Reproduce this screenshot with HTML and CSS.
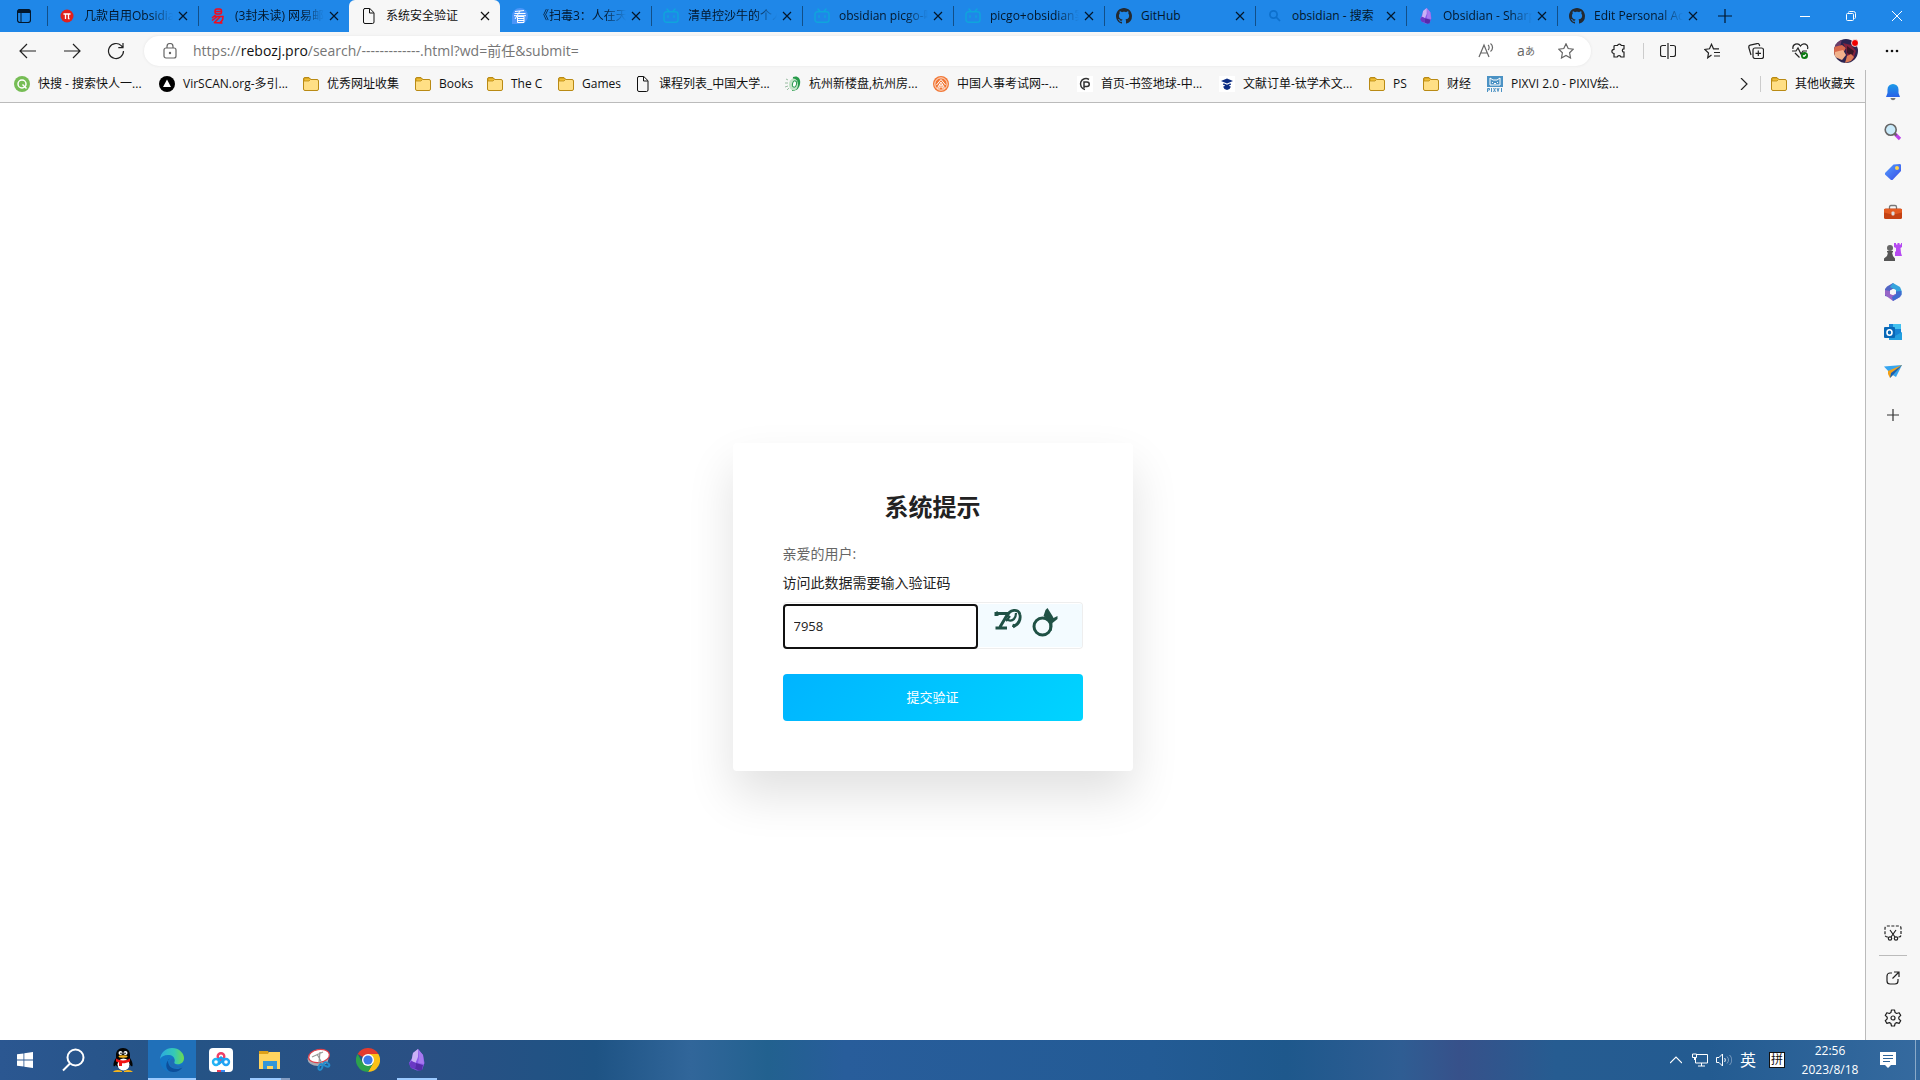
FILE: index.html
```html
<!DOCTYPE html>
<html lang="zh-CN">
<head>
<meta charset="utf-8">
<meta name="viewport" content="width=device-width, initial-scale=1">
<title>系统安全验证</title>
<link rel="stylesheet" href="styles.css">
</head>
<body>
<svg class="sprite" aria-hidden="true">
  <symbol id="close" viewBox="0 0 16 16"><path d="M4 4l8 8M12 4l-8 8" fill="none" stroke="currentColor" stroke-width="1.2"/></symbol>
  <symbol id="page" viewBox="0 0 16 16"><path d="M3.5.5h5.300l4.200 4.200V14a1.500 1.500 0 0 1-1.500 1.500H4A1.500 1.500 0 0 1 2.500 14V2A1.500 1.500 0 0 1 4 .5zM8.500.8V5h4.200" fill="none" stroke="currentColor"/></symbol>
  <symbol id="bili" viewBox="0 0 16 16"><g fill="none" stroke="#0fa5dc" stroke-width="1.400" stroke-linecap="round"><rect x="1" y="3.700" width="14" height="10.600" rx="2.500"/><path d="M4 1l2 2.300M12 1l-2 2.300M5 7.700v1.600M11 7.700v1.600"/></g></symbol>
  <symbol id="github" viewBox="0 0 16 16"><path fill="#24292f" d="M8 0C3.580 0 0 3.580 0 8c0 3.540 2.290 6.530 5.470 7.590.4.070.55-.17.55-.38 0-.19-.01-.82-.01-1.490-2.010.37-2.530-.49-2.690-.94-.09-.23-.48-.94-.82-1.130-.28-.15-.68-.52-.01-.53.63-.01 1.080.58 1.230.82.72 1.210 1.870.87 2.330.66.07-.52.28-.87.51-1.070-1.780-.2-3.640-.89-3.640-3.950 0-.87.31-1.590.82-2.150-.08-.2-.36-1.020.08-2.120 0 0 .67-.21 2.200.82.64-.18 1.320-.27 2-.27s1.360.09 2 .27c1.530-1.040 2.200-.82 2.200-.82.44 1.100.16 1.920.08 2.120.51.56.82 1.270.82 2.150 0 3.070-1.870 3.750-3.650 3.950.29.25.54.73.54 1.480 0 1.070-.01 1.930-.01 2.200 0 .21.15.46.55.38A8.010 8.010 0 0 0 16 8c0-4.420-3.580-8-8-8z"/></symbol>
  <symbol id="obsidian" viewBox="0 0 16 22"><path d="M9 0l5 6 1.500 8L13 21l-5 .5L2 19 0 14l3-5 1-5z" fill="#8b5bea"/><path d="M9 0L4 4 2.500 12l4 2L9 8z" fill="#c9b1f6"/><path d="M9 0l1 8-1 6 6 1-1-9z" fill="#a679f0"/><path d="M2.500 12L0 15l2 4 4 1 1-6z" fill="#6a38c4"/><path d="M7 14l-1 6 4 1.500 3-.5 1-5z" fill="#552baa"/></symbol>
  <symbol id="folder" viewBox="0 0 16 16"><path d="M.5 3A1.500 1.500 0 0 1 2 1.500h4L8 3.500h6A1.500 1.500 0 0 1 15.500 5v8a1.500 1.500 0 0 1-1.500 1.500H2A1.500 1.500 0 0 1 .5 13z" fill="#ffdf85" stroke="#b98a14"/><path d="M1 5V3a1 1 0 0 1 1-1h4l1.500 1.500L6 5z" fill="#f0bd32" stroke="#b98a14" stroke-width=".8"/></symbol>
</svg>

<header class="tabstrip">
  <button class="tab-actions" aria-label="标签页操作菜单"><svg width="14" height="14" viewBox="0 0 14 14"><rect x=".5" y=".5" width="13" height="13" rx="2.500" fill="none" stroke="currentColor" stroke-width="1.200"/><path d="M.5 2.500C.5 1 1 .5 3 .5h8c2 0 2.500.5 2.500 3.500H.5z" fill="currentColor"/><path d="M4 4v9.500" stroke="currentColor"/></svg></button>
  <div class="tabs" role="tablist">
    <div class="tab" role="tab"><svg viewBox="0 0 16 16"><circle cx="8" cy="8" r="6.500" fill="#e0201d"/><path d="M4.500 6h7M6.500 6v5M9.500 6v4.500l1 .5" fill="none" stroke="#fff" stroke-width="1.300"/></svg><span class="tab-title">几款自用Obsidia</span><button class="tab-close" aria-label="关闭标签页"><svg><use href="#close"/></svg></button></div>
    <div class="tab" role="tab"><svg viewBox="0 0 16 16"><g fill="none" stroke="#f30b1c" stroke-width="1.500"><rect x="5" y="1" width="6.500" height="5" rx="2"/><path d="M5 3.500h6M5.500 7L2 10M4 8.500h9c0 3-1 5-3 6M7.500 8.500L2 12.500M10 9l-6 6M4.500 14.500c3 0 4 .5 8 .5"/></g></svg><span class="tab-title">(3封未读) 网易邮</span><button class="tab-close" aria-label="关闭标签页"><svg><use href="#close"/></svg></button></div>
    <div class="tab active" role="tab" aria-selected="true"><svg><use href="#page"/></svg><span class="tab-title whole">系统安全验证</span><button class="tab-close" aria-label="关闭标签页"><svg><use href="#close"/></svg></button></div>
    <div class="tab after-active" role="tab"><svg viewBox="0 0 16 16"><path d="M0 8a8 8 0 1 1 8 8H0z" fill="#4c96f8"/><path d="M3 3.500l9-1M2.500 5.500h11M2 7.700h12M8 3L3 11M5.500 8.500h6.500v6H5.500zM5.500 10.500H12M5.500 12.500H12" fill="none" stroke="#fff"/></svg><span class="tab-title">《扫毒3：人在天</span><button class="tab-close" aria-label="关闭标签页"><svg><use href="#close"/></svg></button></div>
    <div class="tab" role="tab"><svg><use href="#bili"/></svg><span class="tab-title">清单控沙牛的个人</span><button class="tab-close" aria-label="关闭标签页"><svg><use href="#close"/></svg></button></div>
    <div class="tab" role="tab"><svg><use href="#bili"/></svg><span class="tab-title">obsidian picgo-哔</span><button class="tab-close" aria-label="关闭标签页"><svg><use href="#close"/></svg></button></div>
    <div class="tab" role="tab"><svg><use href="#bili"/></svg><span class="tab-title">picgo+obsidian实</span><button class="tab-close" aria-label="关闭标签页"><svg><use href="#close"/></svg></button></div>
    <div class="tab" role="tab"><svg><use href="#github"/></svg><span class="tab-title whole">GitHub</span><button class="tab-close" aria-label="关闭标签页"><svg><use href="#close"/></svg></button></div>
    <div class="tab" role="tab"><svg viewBox="0 0 16 16"><g fill="none" stroke="#0d70cd" stroke-width="1.700"><circle cx="6.500" cy="6.500" r="3.600"/><path d="M9.200 9.200l3.800 3.800"/></g></svg><span class="tab-title whole">obsidian - 搜索</span><button class="tab-close" aria-label="关闭标签页"><svg><use href="#close"/></svg></button></div>
    <div class="tab" role="tab"><svg><use href="#obsidian"/></svg><span class="tab-title">Obsidian - Sharp</span><button class="tab-close" aria-label="关闭标签页"><svg><use href="#close"/></svg></button></div>
    <div class="tab" role="tab"><svg><use href="#github"/></svg><span class="tab-title">Edit Personal Ac</span><button class="tab-close" aria-label="关闭标签页"><svg><use href="#close"/></svg></button></div>
  </div>
  <button class="new-tab" aria-label="新建标签页"><svg width="14" height="14" viewBox="0 0 14 14"><path d="M7 0v14M0 7h14" stroke="currentColor" stroke-width="1.200"/></svg></button>
  <div class="window-controls">
    <button aria-label="最小化"><svg width="10" height="10" viewBox="0 0 10 10"><path d="M0 5.500h10" stroke="currentColor"/></svg></button>
    <button aria-label="还原"><svg width="10" height="10" viewBox="0 0 10 10"><g fill="none" stroke="currentColor"><rect x=".5" y="2.500" width="7" height="7" rx="1"/><path d="M2.500 1.500a1 1 0 0 1 1-1h4a2 2 0 0 1 2 2v4a1 1 0 0 1-1 1"/></g></svg></button>
    <button aria-label="关闭"><svg width="10" height="10" viewBox="0 0 10 10"><path d="M0 0l10 10M10 0L0 10" stroke="currentColor"/></svg></button>
  </div>
</header>

<nav class="toolbar">
  <button aria-label="后退"><svg width="18" height="16" viewBox="0 0 18 16"><path d="M17 8H1M8 1L1 8l7 7" /></svg></button>
  <button aria-label="前进"><svg width="18" height="16" viewBox="0 0 18 16"><path d="M1 8h16M10 1l7 7-7 7"/></svg></button>
  <button aria-label="刷新"><svg width="18" height="18" viewBox="0 0 18 18"><path d="M16.500 9a7.500 7.500 0 1 1-2.300-5.400L16 5.500M16 1v4.700h-4.700"/></svg></button>
  <div class="omnibox">
    <svg class="lock" width="14" height="16" viewBox="0 0 14 16"><rect x="1" y="5" width="12" height="10" rx="2"/><path d="M4 5V3.500a3 3 0 0 1 6 0V5"/><circle cx="7" cy="10" r=".6"/></svg>
    <div class="url">https://<b>rebozj.pro</b>/search/-------------.html?wd=前任&amp;submit=</div>
    <button aria-label="大声朗读"><svg width="18" height="16" viewBox="0 0 18 16"><path d="M2 14L7 2l5 12M4 10h6M11 2c1.500 1 1.500 4 0 5M13.500.5c2.700 2 2.700 6 0 8"/></svg></button>
    <button class="translate" aria-label="翻译">a<small>あ</small></button>
    <button aria-label="收藏"><svg width="16" height="16" viewBox="0 0 16 16"><path d="M8 .8l2.200 4.700 5 .7-3.600 3.600.9 5.200L8 12.500 3.500 15l.9-5.200L.8 6.200l5-.7z"/></svg></button>
  </div>
  <button aria-label="扩展"><svg width="16" height="16" viewBox="0 0 16 16"><path d="M4 2.500h2.500a2 2 0 0 1 3.800 0H13v3.300a1.700 1.700 0 0 0 0 3.400V14h-3a2 2 0 0 0-3.800 0H3v-3.500a2 2 0 0 1 0-4.200V3.500a1 1 0 0 1 1-1z"/></svg></button>
  <span class="toolbar-sep"></span>
  <button aria-label="分屏"><svg width="16" height="16" viewBox="0 0 16 16"><path d="M6 2.500H2.500a2 2 0 0 0-2 2v7a2 2 0 0 0 2 2H6M10 2.500h3.500a2 2 0 0 1 2 2v7a2 2 0 0 1-2 2H10M8 0v16"/></svg></button>
  <button aria-label="收藏夹"><svg width="16" height="16" viewBox="0 0 16 16"><path d="M7.500 12l-3.800 2.800.8-4.800L.8 6.500l4.700-.7 2-4.500 2 4.500H15M10 9.500h6M10 13h6"/></svg></button>
  <button aria-label="集锦"><svg width="16" height="16" viewBox="0 0 16 16"><rect x="5" y="5" width="10.500" height="10.500" rx="2"/><path d="M10.300 7.500v5.500M7.500 10.300H13M3 12L.8 4.500a2 2 0 0 1 1.400-2.300L9 .6a2 2 0 0 1 2.400 1.400l.3 1"/></svg></button>
  <button aria-label="浏览器概要"><svg width="17" height="16" viewBox="0 0 17 16"><path d="M1 6c-1-5 5-7 7.500-3C11-1 17 1 15.500 6M0 8h4l2-3 3 6 2-3h4M3 10l4.500 4.500"/><circle cx="12.500" cy="12.500" r="3.500" fill="#0c7a12" stroke="none"/><path d="M11 12.500l1 1 2-2" stroke="#fff"/></svg></button>
  <button class="profile" aria-label="个人资料"><svg class="avatar" width="24" height="24" viewBox="0 0 24 24"><defs><clipPath id="round"><circle cx="12" cy="12" r="12"/></clipPath></defs><g clip-path="url(#round)" stroke="none"><path fill="#2c2450" d="M0 0h24v24H0z"/><path fill="#6b3d69" d="M0 3l8-3-2 8-6 3z"/><path fill="#d8694c" d="M0 8l8-2 4 3-3 5-9 3z"/><path fill="#f2b28c" d="M1 13l8-2 3 5-4 5-7-3z"/><path fill="#82223c" d="M9 4l8 2 5 6-3 9-6-3-1-8z"/><path fill="#3a1728" d="M13 7l7 5-2 5-5-3z"/><path fill="#dc7b58" d="M13 17l4-2 3 3-3 4-6 2z"/></g><circle cx="21" cy="4" r="3.500" fill="#f00000" stroke="#f7f7f7" stroke-width=".8"/></svg></button>
  <button aria-label="设置及其他"><svg width="14" height="4" viewBox="0 0 14 4"><g fill="#111" stroke="none"><circle cx="2" cy="2" r="1.300"/><circle cx="7" cy="2" r="1.300"/><circle cx="12" cy="2" r="1.300"/></g></svg></button>
</nav>

<div class="workspace">
  <nav class="bookmarks">
    <a href="#"><svg viewBox="0 0 16 16"><circle cx="8" cy="8" r="8" fill="#76bd55"/><circle cx="8" cy="8" r="4" fill="none" stroke="#fff" stroke-width="1.500"/><path d="M8.500 8.500l4 4" stroke="#fff" stroke-width="1.500"/></svg>快搜 - 搜索快人一...</a>
    <a href="#"><svg viewBox="0 0 16 16"><circle cx="8" cy="8" r="8"/><path d="M8 3.500l4 7.500H4z" fill="#fff"/></svg>VirSCAN.org-多引...</a>
    <a href="#"><svg><use href="#folder"/></svg>优秀网址收集</a>
    <a href="#"><svg><use href="#folder"/></svg>Books</a>
    <a href="#"><svg><use href="#folder"/></svg>The C</a>
    <a href="#"><svg><use href="#folder"/></svg>Games</a>
    <a href="#"><svg><use href="#page"/></svg>课程列表_中国大学...</a>
    <a href="#"><svg viewBox="0 0 16 16"><path d="M8 1c5-2 8 2 7 7s-4 7-8 7z" fill="#279b4b"/><ellipse cx="8.500" cy="8.500" rx="4.500" ry="6" fill="#c4e4c8"/><ellipse cx="9.500" cy="8" rx="2" ry="3.200" fill="#fff" stroke="#2b9a50" transform="rotate(15 9.500 8)"/><path d="M1 3l2 1M0 7h3M0 11l3-1M2 14l2-2" stroke="#9bbda3"/></svg>杭州新楼盘,杭州房...</a>
    <a href="#"><svg viewBox="0 0 16 16"><circle cx="8" cy="8" r="8" fill="#f27735"/><circle cx="8" cy="8" r="6.200" fill="none" stroke="#fff" stroke-width=".8"/><path d="M3.500 9L8 3.500 12.500 9M5 11l3-5 3 5M4 12h3V9h2v3h3" fill="none" stroke="#fff"/></svg>中国人事考试网--...</a>
    <a href="#"><svg viewBox="0 0 16 16"><path fill="#fff" d="M0 0h16v16H0z"/><g fill="none" stroke="#333" stroke-width="1.500"><path d="M12 3.500A5.500 5.500 0 1 0 8 13.500"/><path d="M7 12V6h3a2 2 0 0 1 0 4.500H7"/></g></svg>首页-书签地球-中...</a>
    <a href="#"><svg viewBox="0 0 16 16"><path fill="#fff" d="M0 0h16v16H0z"/><path fill="#0c2d83" d="M8 2.500l6 2.500-6 2.500L2 5zM4.500 7.300L8 8.800l3.500-1.500.5 1.700H10l1 1.500h1L10.500 13 8 14l-2.500-1L4 10.500h1L6 9H4z"/></svg>文献订单-钛学术文...</a>
    <a href="#"><svg><use href="#folder"/></svg>PS</a>
    <a href="#"><svg><use href="#folder"/></svg>财经</a>
    <a href="#"><svg viewBox="0 0 16 16"><path fill="#4b92c4" d="M0 0h16v11H0z"/><path d="M3 9V2l3 2h4l3-2v7zM5.500 6v1M10.500 6v1M7 7.500h2" fill="none" stroke="#fff"/><path d="M.5 16v-3.500h2v1.500h-2M4.500 12v4M6.500 12l2 4M8.500 12l-2 4M10 12l1 3.500 1-3.500M14.500 12v4" fill="none" stroke="#4b92c4"/></svg>PIXVI 2.0 - PIXIV绘...</a>
    <button aria-label="更多收藏夹"><svg width="8" height="12" viewBox="0 0 8 12"><path d="M1 0l6 6-6 6" fill="none" stroke="#222" stroke-width="1.200"/></svg></button>
    <a class="other" href="#"><svg><use href="#folder"/></svg>其他收藏夹</a>
  </nav>

  <main class="page">
    <form class="card">
      <h1>系统提示</h1>
      <p class="greeting">亲爱的用户:</p>
      <label for="code">访问此数据需要输入验证码</label>
      <div class="field">
        <input id="code" type="text" value="7958">
        <svg class="captcha" viewBox="0 0 104 43" role="img" aria-label="验证码"><g fill="none" stroke="#1f5145" stroke-width="3"><path d="M18 12V9.500h12L22 23M17.500 24h11.500M18 8l3 3"/><path d="M29 13c2-8 12-9 13-2 1 6-3 10-7 12" stroke-width="2.800"/><path d="M30 16c5 2 8-2 8-7M28 17l4-5M35 23l1-3" stroke-width="2.200"/><ellipse cx="64.500" cy="22.500" rx="8.500" ry="8.500"/></g><path d="M69.500 4l5 8 1 2 4-2v3l-5 4-1 8-2-2v-8l-6-5 2-6z" fill="#1f5145"/></svg>
      </div>
      <button class="submit" type="button">提交验证</button>
    </form>
  </main>

  <aside class="sidebar">
    <button aria-label="通知"><svg viewBox="0 0 18 18"><defs><linearGradient id="bell" x2="0" y2="1"><stop stop-color="#1b9be8"/><stop offset="1" stop-color="#2a61e8"/></linearGradient></defs><path d="M9 1a5.500 5.500 0 0 1 5.500 5.500V10l1.500 4H2l1.500-4V6.500A5.500 5.500 0 0 1 9 1z" fill="url(#bell)"/><path d="M6.500 15h5c-.5 3-4.500 3-5 0z" fill="#777"/></svg></button>
    <button aria-label="搜索"><svg viewBox="0 0 18 18"><path d="M11 11l5 5" stroke="#bd41ea" stroke-width="3.200"/><path d="M10 10l2.500 2.500" stroke="#666" stroke-width="2"/><circle cx="6.700" cy="6.700" r="5.500" fill="#c9eafa" stroke="#666" stroke-width="1.600"/></svg></button>
    <button aria-label="购物"><svg viewBox="0 0 18 18"><defs><linearGradient id="tag" x2="1" y2="1"><stop stop-color="#54a0ff"/><stop offset="1" stop-color="#394be6"/></linearGradient></defs><path d="M9.500 1.500L16 1l1 .8V8l-8.500 9H7L1 11.500V10z" fill="url(#tag)"/><circle cx="13" cy="5" r="2" fill="#ffd54d"/></svg></button>
    <button aria-label="工具"><svg viewBox="0 0 18 18"><path d="M5.500 6V4c0-1 .5-1.500 1.500-1.500h4c1 0 1.500.5 1.500 1.500v2" fill="none" stroke="#777" stroke-width="1.300"/><rect y="5.500" width="18" height="10.500" rx="1.500" fill="#c54213"/><path d="M0 6h18v3.500L12 11H6L0 9.500z" fill="#e45b21"/><rect x="7.500" y="8.500" width="3" height="4" rx="1" fill="#ddd"/></svg></button>
    <button aria-label="游戏"><svg viewBox="0 0 18 18"><circle cx="6" cy="5" r="3" fill="#666"/><path d="M3 8h6v1.500H8L9 13l2 2.500V18H0v-2.500L3 13l1-3.500H3z" fill="#555"/><path d="M10 0h2v1.500h1.500V0h2v1.500H17V0h1v4l-1.500 1 .5 5 1 3h-7V9l1-1V5L10 4z" fill="#b64af2"/></svg></button>
    <button aria-label="Microsoft 365"><svg viewBox="0 0 18 18"><path d="M9 0L3 3.500 1 6v7l5 1V8l6-4z" fill="#5265c5"/><path d="M9 0l7 4 1.500 3.500v5L12 9V7L6 4z" fill="#35a4dd"/><path d="M1 12l8 6 7-4 1.500-3-5-1L9 12 6 11V8L1 7z" fill="#9766c7"/><path d="M12 8.500v3L8 14l1 4 7-4 1.500-3V8z" fill="#3f6dd0"/><path d="M9 6l3 1.500v3L9 12l-3-1.500v-3z" fill="#f7f7f7"/></svg></button>
    <button aria-label="Outlook"><svg viewBox="0 0 18 18"><path d="M5 1h12v16H5z" fill="#1682d4"/><path d="M9 1h8v5H9z" fill="#42c1f0"/><path d="M5 10l6 3 7-4v8H5z" fill="#239fe0"/><rect y="4" width="11" height="11" rx="1" fill="#0868b7"/><ellipse cx="5.500" cy="9.500" rx="2.500" ry="2.800" fill="none" stroke="#fff" stroke-width="1.600"/></svg></button>
    <button aria-label="Drop"><svg viewBox="0 0 18 18"><path d="M0 3.500l18-1.500-6 12-5-3z" fill="#36a5ef"/><path d="M18 2L4 8v3l2 4z" fill="#f3a118"/><path d="M18 2L7 10l-1 5 3-3z" fill="#1760b5"/></svg></button>
    <button class="add" aria-label="自定义"><svg viewBox="0 0 18 18"><path d="M9 3v12M3 9h12" stroke="#333" stroke-width="1.200"/></svg></button>
    <div class="sidebar-bottom">
      <button aria-label="截图"><svg viewBox="0 0 18 18"><g fill="none" stroke="#222" stroke-width="1.200"><path d="M4 13H3a2 2 0 0 1-2-2V4a2 2 0 0 1 2-2h12a2 2 0 0 1 2 2v7a2 2 0 0 1-2 2h-1" stroke-dasharray="3 1.500"/><path d="M6 6l5 7M12 6l-5 7"/><circle cx="6" cy="14.500" r="1.700"/><circle cx="12" cy="14.500" r="1.700"/></g></svg></button>
      <hr>
      <button aria-label="外部打开"><svg viewBox="0 0 18 18"><path d="M8 4H6a3 3 0 0 0-3 3v5a3 3 0 0 0 3 3h5a3 3 0 0 0 3-3v-2M10 3h5v5M15 3L8.500 9.500" fill="none" stroke="#222" stroke-width="1.200"/></svg></button>
      <button aria-label="设置"><svg viewBox="0 0 18 18"><g fill="none" stroke="#222" stroke-width="1.200"><path d="M7.500 1h3l.6 2.600 1.500.9 2.500-.8 1.600 2.700-1.900 1.800v1.700l1.900 1.800-1.600 2.700-2.500-.8-1.500.9-.6 2.500h-3l-.6-2.500-1.500-.9-2.500.8-1.600-2.700 1.900-1.800V8.200L1.300 6.400l1.600-2.700 2.500.8 1.500-.9z" stroke-linejoin="round"/><circle cx="9" cy="9" r="2"/></g></svg></button>
    </div>
  </aside>
</div>

<footer class="taskbar">
  <button aria-label="开始"><svg width="16" height="16" viewBox="0 0 16 16"><path d="M0 2.300L6.500 1.400v6.200H0zM7.300 1.300L16 0v7.600H7.300zM0 8.400h6.500v6.200L0 13.700zM7.300 8.400H16V16l-8.700-1.300z" fill="#fff"/></svg></button>
  <button aria-label="搜索"><svg width="24" height="24" viewBox="0 0 24 24"><g fill="none" stroke="#fff" stroke-width="2"><circle cx="13.500" cy="9.500" r="8"/><path d="M8 15.500L1 22.500"/></g></svg></button>
  <button aria-label="QQ"><svg width="24" height="24" viewBox="0 0 24 24"><path d="M12 0C7.500 0 5 3 5 7v3c-1.500 2-3 5-2.500 8 .5 1 2-.5 2.500-1 1 4 13 4 14 0 .5.500 2 2 2.500 1 .5-3-1-6-2.500-8V7c0-4-2.500-7-7-7z" fill="#050505"/><ellipse cx="12.500" cy="16.500" rx="6" ry="6" fill="#fff"/><path d="M2 24c1-2 5-3 9-1v1zM13 23c4-2 7-1 9 1h-9z" fill="#f5b41b"/><circle cx="9.500" cy="5" r="2" fill="#fff"/><circle cx="14.500" cy="5" r="2" fill="#fff"/><circle cx="10" cy="5.300" r=".8"/><circle cx="14" cy="5.300" r=".8"/><ellipse cx="12" cy="8.500" rx="4.500" ry="1.200" fill="#f5b41b"/><path d="M5 10.500c4 2.500 10 2.500 14 0v3c-3 1.500-6 2-8 1.700V18H8v-3.500l-3-1z" fill="#f01313"/></svg></button>
  <button class="running current" aria-label="Microsoft Edge"><svg width="24" height="24" viewBox="0 0 24 24"><defs><linearGradient id="edge"><stop stop-color="#2ba9e0"/><stop offset=".6" stop-color="#35c9b6"/><stop offset="1" stop-color="#6ddb50"/></linearGradient></defs><circle cx="12" cy="12" r="12" fill="#1476c6"/><path d="M0 11C1 4 6 0 12 0c7 0 12 5 12 10s-4 7-8 6c-3-.5-2-2-1.500-3.500C15 9 12 7 8 7S1 9 0 11z" fill="url(#edge)"/><path d="M8 13c0 5 4 8 9 8 2 0 4-.7 5.500-1.500C20 23 15 25 10 23.500 5 21 5 14 10 10.500 8.500 11 8 12 8 13z" fill="#0d4f9b"/><path d="M14 11c2 3-2 4 3 6.500 2 .8 5 .3 6-.5l-1 2c-5 3-14 1-12-6 1-2 3-3 4-2z" fill="#1f6cb6"/></svg></button>
  <button aria-label="百度网盘"><svg width="24" height="24" viewBox="0 0 24 24"><rect width="24" height="24" rx="4" fill="#fff"/><g fill="none" stroke-width="2.400"><circle cx="12" cy="8.500" r="3.300" stroke="#ef3f66"/><circle cx="7" cy="14" r="3" stroke="#22b4f5"/><circle cx="17" cy="14" r="3" stroke="#22a4f5"/><path d="M9 12l3-2.500 3 2.500M9.500 16l5-4" stroke="#1da0f0"/></g><path d="M8 22h4v2H8z" fill="#e83a55"/><path d="M12 22h4v2h-4z" fill="#3789f4"/></svg></button>
  <button class="running grouped" aria-label="文件资源管理器"><svg width="24" height="24" viewBox="0 0 24 24"><path d="M1 3h9l1 2h11v4H1z" fill="#dda019"/><path d="M1 6h9l1-2h11v17H1z" fill="#ffd45f"/><path d="M5 21v-8h14v8h-4v-3H9v3z" fill="#3496d8"/></svg></button>
  <button aria-label="截图工具"><svg width="24" height="24" viewBox="0 0 24 24"><ellipse cx="11" cy="11" rx="10.500" ry="7" fill="#a7acb5"/><ellipse cx="12" cy="8" rx="10.500" ry="6.500" transform="rotate(-10 12 8)" fill="#fff" stroke="#df404b" stroke-width="1.200"/><path d="M5 9l11-5M13 4l-1 11M10 6l6 11" stroke="#999" stroke-width="1.200"/><g fill="none" stroke="#238ccc" stroke-width="2"><ellipse cx="13.500" cy="19" rx="1.800" ry="3" transform="rotate(20 13.500 19)"/><ellipse cx="19.500" cy="16.500" rx="3" ry="1.800" transform="rotate(25 19.500 16.500)"/></g></svg></button>
  <button aria-label="Google Chrome"><svg width="24" height="24" viewBox="0 0 24 24"><path d="M12 12L1.600 6A12 12 0 0 1 22.400 6z" fill="#e33b2e"/><path d="M12 12V6h10.400A12 12 0 0 1 12 24l5.200-9z" fill="#fbc116"/><path d="M12 12l5.200 3L12 24A12 12 0 0 1 1.600 6l5.200 9z" fill="#2ca24c"/><circle cx="12" cy="12" r="6" fill="#fff"/><circle cx="12" cy="12" r="4.600" fill="#3b79e8"/></svg></button>
  <button class="running" aria-label="Obsidian"><svg width="16" height="22"><use href="#obsidian"/></svg></button>
  <div class="tray">
    <button aria-label="显示隐藏的图标"><svg width="12" height="8" viewBox="0 0 12 8"><path d="M0 7l6-6 6 6" fill="none" stroke="#fff" stroke-width="1.200"/></svg></button>
    <button aria-label="网络"><svg width="16" height="14" viewBox="0 0 16 14"><path d="M5 1.500h10.500v8.500H3.500V5M9.500 10v3M6 13h7M.5 1v3.500h4V1zM2.500 4.500V7" fill="none" stroke="#fff"/></svg></button>
    <button aria-label="音量"><svg width="16" height="14" viewBox="0 0 16 14"><path d="M.5 4.500H3L6.500 1v12L3 9.500H.5zM8.500 5c1 1 1 3 0 4" fill="none" stroke="#fff"/><path d="M11 3.500c2 2 2 5 0 7M13.500 2c3 3 3 7 0 10" fill="none" stroke="#7f9fc1"/></svg></button>
    <button class="lang">英</button>
    <button class="ime"><span>拼</span></button>
    <button class="clock"><time>22:56</time><time>2023/8/18</time></button>
    <button class="action-center" aria-label="通知中心"><svg width="16" height="16" viewBox="0 0 16 16"><path d="M0 0h16v13h-5l-3 3-3-3H0z" fill="#fff"/><path d="M3 3.500h10M3 6.500h10M3 9.500h7" stroke="#2e6499"/></svg></button>
  </div>
</footer>
</body>
</html>
```
FILE: styles.css
```css
* { box-sizing: border-box; }

body {
  margin: 0;
  min-height: 100vh;
  display: flex;
  flex-direction: column;
  background: #fff;
  color: #111;
  font: 12px/16px "Open Sans", "Noto Sans CJK SC", sans-serif;
}

button {
  display: flex;
  align-items: center;
  justify-content: center;
  padding: 0;
  border: 0;
  background: none;
  color: inherit;
  font: inherit;
}

svg { display: block; flex: none; }
.sprite { position: absolute; width: 0; height: 0; }

/* Tab strip */
.tabstrip { display: flex; height: 32px; background: #1f87e8; color: #03172b; }
.tab-actions { width: 47px; flex: none; }
.tabs { display: flex; flex: 0 1 1661px; min-width: 0; }
.tab {
  position: relative;
  display: flex;
  flex: 1 1 0;
  align-items: center;
  min-width: 0;
  padding: 0 7px 0 12px;
}
.tab > svg { width: 16px; height: 16px; margin-right: 8px; }
.tab::before {
  content: "";
  position: absolute;
  left: 0;
  top: 6px;
  width: 1px;
  height: 20px;
  background: #124f88;
}
.tab.active::before, .tab.after-active::before { display: none; }
.tab.active { background: #f7f7f7; border-radius: 6px 6px 0 0; color: #111; }
.tab-title {
  flex: 1;
  min-width: 0;
  padding-left: 1px;
  overflow: hidden;
  white-space: nowrap;
  mask-image: linear-gradient(to right, #000 75%, transparent);
}
.tab-title.whole { overflow: visible; mask-image: none; }
.tab-close { width: 16px; height: 16px; margin-left: 2px; }
.tab-close svg { width: 16px; height: 16px; }
.new-tab { width: 34px; flex: none; }
.window-controls { display: flex; margin-left: auto; color: #fff; }
.window-controls button { width: 46px; }

/* Toolbar */
.toolbar {
  display: flex;
  align-items: center;
  height: 38px;
  padding: 0 6px;
  background: #f7f7f7;
}
.toolbar > button { width: 44px; height: 32px; flex: none; }
.toolbar > .profile { width: 48px; }
.toolbar svg { fill: none; stroke: #222; stroke-width: 1.2; }
.omnibox {
  display: flex;
  align-items: center;
  flex: 1;
  height: 30px;
  margin: 0 6px;
  padding: 0 5px 0 19px;
  border-radius: 15px;
  background: #fff;
  box-shadow: 0 0 3px #e4e4e4;
}
.omnibox svg { stroke: #666; }
.omnibox button { width: 40px; height: 30px; }
.url { flex: 1; margin-left: 16px; color: #767676; font-size: 14px; line-height: 20px; }
.url b { color: #111; font-weight: 400; }
.omnibox .translate { color: #666; font-size: 14px; }
.translate small { font-size: 10px; }
.toolbar-sep { width: 1px; height: 16px; margin: 0 2px; background: #ccc; }

/* Workspace: bookmarks, page and sidebar */
.workspace {
  flex: 1;
  display: grid;
  grid-template-columns: 1fr 55px;
  grid-template-rows: 33px 1fr;
}
.bookmarks {
  display: grid;
  grid-template-columns: 145px 144px 112px 72px 71px 77px 150px 148px 144px 142px 150px 54px 64px 1fr 32px 105px;
  align-items: center;
  padding: 0 0 4px 14px;
  border-bottom: 1px solid #bbb;
  background: #f7f7f7;
}
.bookmarks a {
  display: flex;
  align-items: center;
  gap: 8px;
  color: #111;
  text-decoration: none;
  white-space: nowrap;
}
.bookmarks a svg { width: 16px; height: 16px; }
.bookmarks .other { padding-left: 10px; border-left: 1px solid #ccc; }

.sidebar {
  grid-column: 2;
  grid-row: 1 / 3;
  display: flex;
  flex-direction: column;
  padding: 2px 0;
  border-left: 1px solid #bbb;
  background: #f7f7f7;
}
.sidebar button { width: 100%; height: 40px; flex: none; }
.sidebar svg { width: 18px; height: 18px; }
.sidebar .add { margin-top: 3px; }
.sidebar-bottom { margin-top: auto; }
.sidebar hr { width: 28px; height: 1px; margin: 2px auto; border: 0; background: #bbb; }

.page { display: flex; align-items: center; justify-content: center; padding-top: 70px; }
.card {
  width: 400px;
  padding: 50px;
  border-radius: 4px;
  background: #fff;
  box-shadow: 0 24px 48px rgba(0, 0, 0, 0.12);
  color: #222;
  font-size: 14px;
}
.card h1 { margin: 0 0 18px; font-size: 24px; line-height: 28px; text-align: center; }
.card p, .card label { display: block; margin: 0; line-height: 29px; }
.card .greeting { color: #666; }
.field {
  display: flex;
  align-items: center;
  height: 47px;
  margin: 5px 0 25px;
  padding-right: 1px;
  border-radius: 4px;
  box-shadow: inset 0 0 0 1px #eee;
}
.field input {
  flex: 1;
  align-self: flex-end;
  min-width: 0;
  height: 45px;
  padding: 0 9px;
  border: 2px solid #111;
  border-radius: 4px;
  outline: 0;
  background: #fff;
  color: #222;
  font: 13px/20px "Open Sans", sans-serif;
}
.captcha { width: 104px; height: 43px; background: #f3fbff; }
.submit {
  width: 100%;
  height: 47px;
  border-radius: 4px;
  background: linear-gradient(135deg, #00b4ff, #00d4ff);
  color: #fff;
  font-size: 13px;
}

/* Taskbar */
.taskbar {
  display: flex;
  gap: 1px;
  height: 40px;
  padding-left: 1px;
  background: linear-gradient(90deg, #2b5791, #255385 10%, #2a5084 22%, #1e5384 31%, #31669a 36%, #22618f 40%, #285d9b 44%, #235b95 60%, #1e588c 67%, #2f5d93 73%, #37518a 76%, #265c91 81%, #235b91 89%, #356a9f);
  color: #fff;
}
.taskbar > button { position: relative; width: 48px; }
.taskbar .current { background: #2070b9; }
.taskbar .running::after {
  content: "";
  position: absolute;
  left: 4px;
  right: 4px;
  bottom: 0;
  height: 2px;
  background: #9bcaff;
}
.taskbar .current::after { left: 0; right: 0; }
.taskbar .grouped::after { background: linear-gradient(90deg, #9bcaff 78%, #839bc0 78%); }
.tray { display: flex; margin-left: auto; padding-right: 4px; }
.tray button { width: 24px; }
.tray .lang { font-size: 16px; }
.tray .ime { width: 34px; }
.ime span { width: 16px; height: 16px; border: 1px solid #111; background: #fff; color: #111; line-height: 14px; }
.tray .clock { flex-direction: column; width: 72px; line-height: 19px; }
.tray .action-center { width: 50px; padding-right: 6px; border-right: 1px solid #8aaac9; }
```
